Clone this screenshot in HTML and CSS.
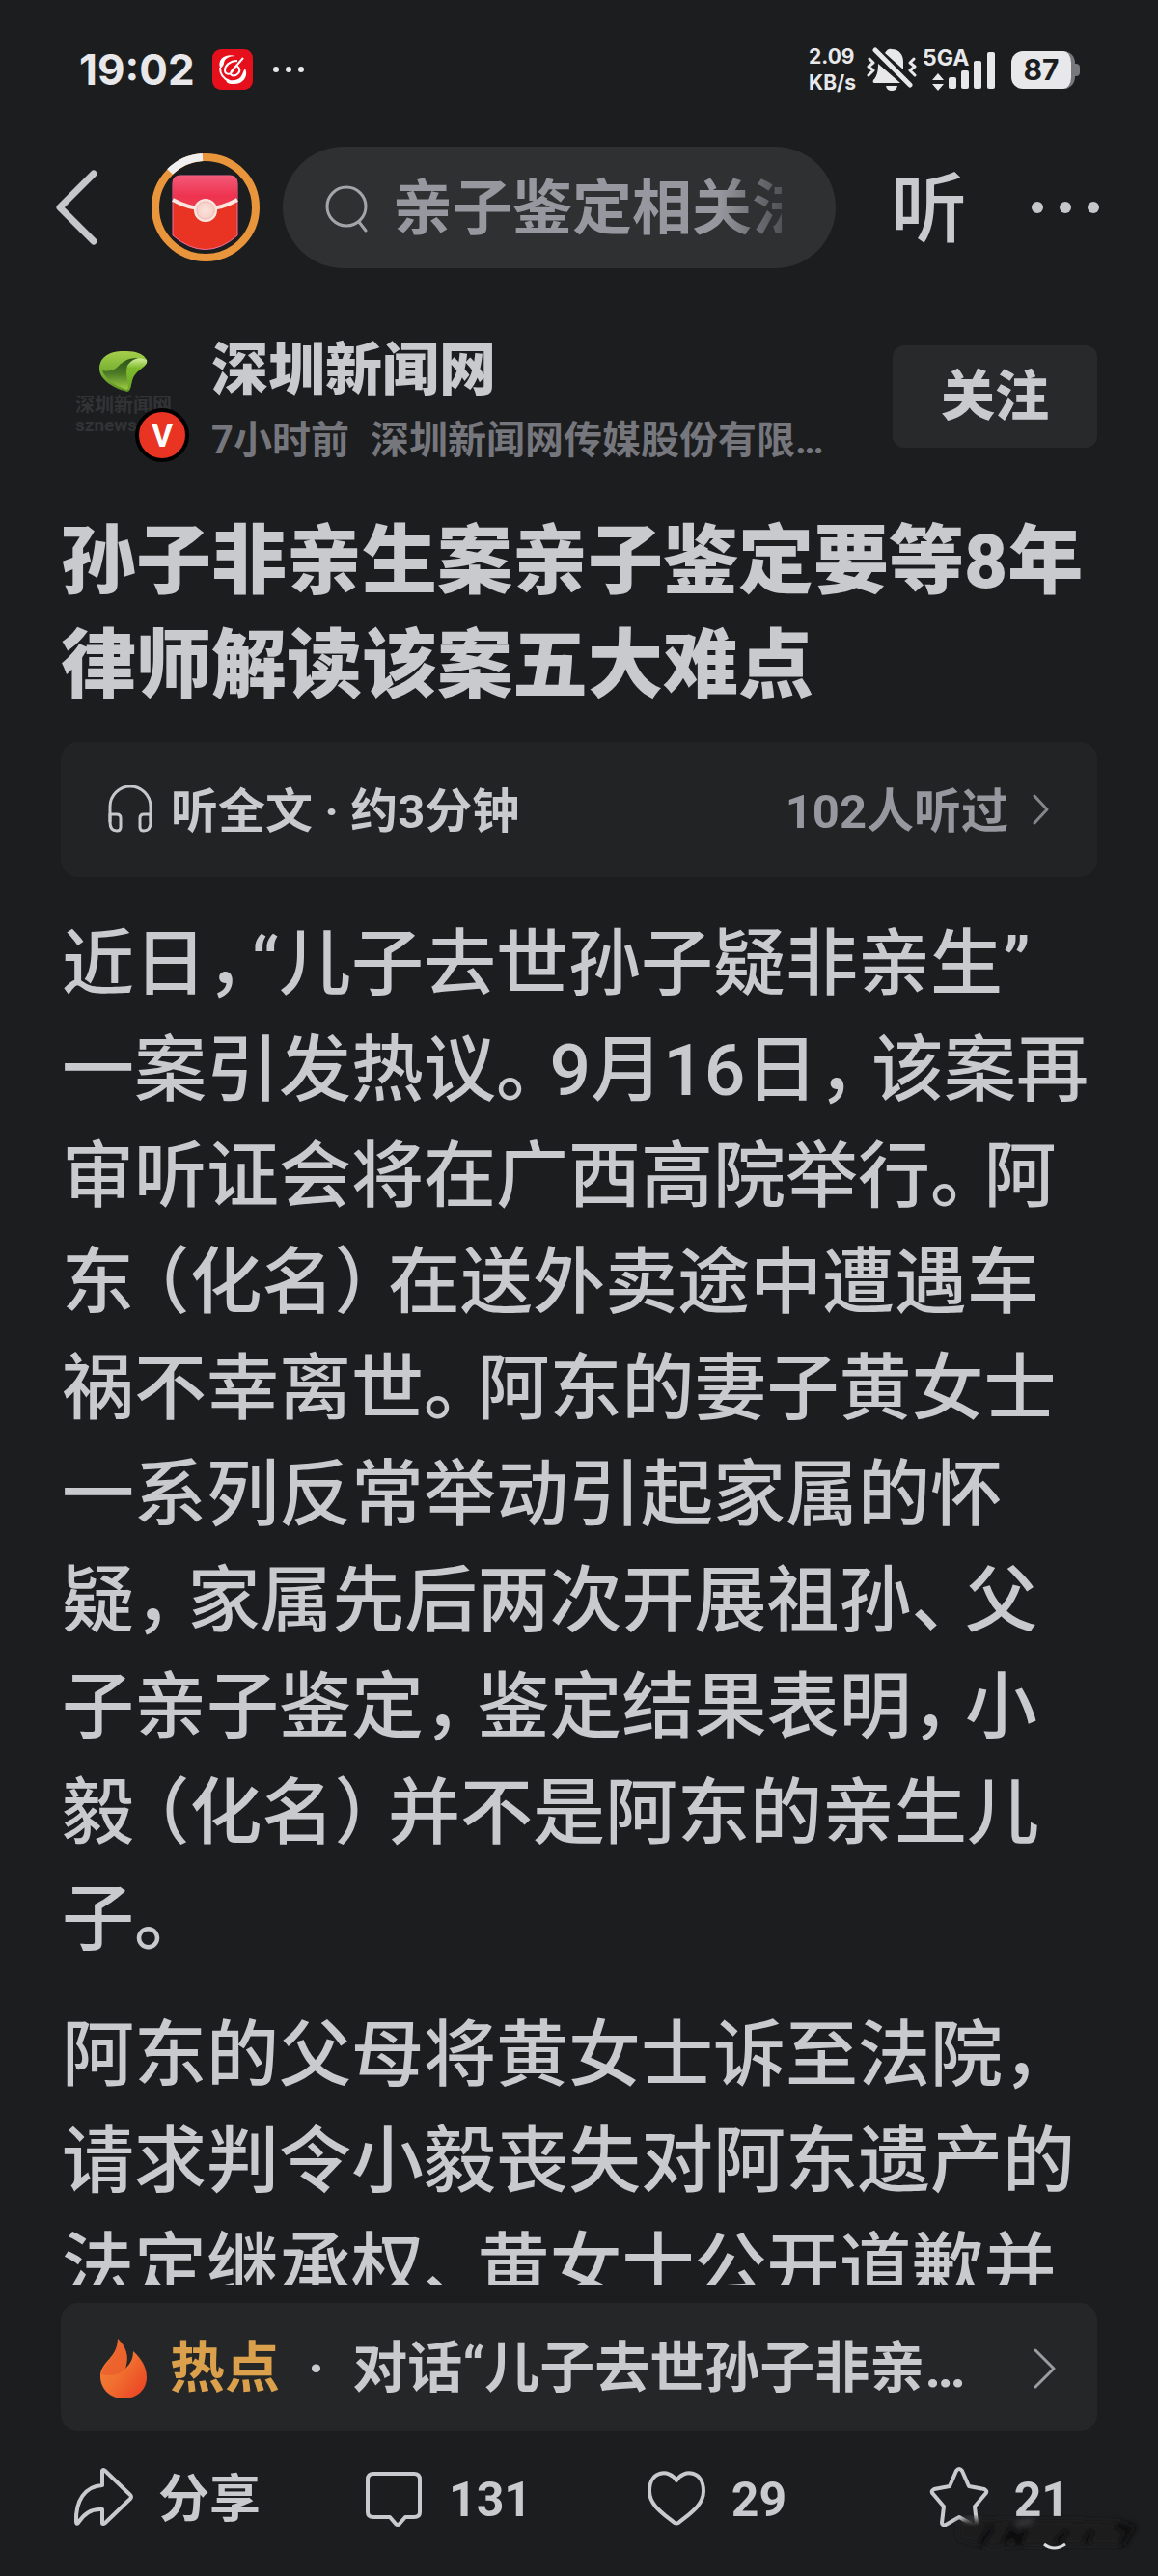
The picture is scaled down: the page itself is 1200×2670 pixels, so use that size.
FILE: index.html
```
<!DOCTYPE html>
<html lang="zh-CN">
<head>
    <meta charset="UTF-8">
    <meta name="viewport" content="width=device-width, initial-scale=1">
    <title>孙子非亲生案亲子鉴定要等8年 律师解读该案五大难点</title>
    <link rel="stylesheet" href="styles.css">
</head>
<body>
    <!-- phone status bar -->
    <div class="status">
        <span class="time">19:02</span>
        <svg class="app-badge" width="42" height="42" viewBox="0 0 42 42">
            <rect width="42" height="42" rx="9" fill="#e60f1c"/>
            <path d="M8 19c-3-9 6-15 16-12-7 0-12 3-12 8-1 3-3 5-4 4z" fill="#fff"/>
            <path d="M34 20c4 9-3 17-13 16-5 0-8-3-6-5 3 2 12 2 15-3 2-3 2-6 4-8z" fill="#fff"/>
            <path d="M8 19c0 7 4 12 10 14M32 9L19 24M26 12c-8 0-13 5-13 10 0 4 5 5 7 2l4-6c3-2 6 4 3 7s-6 3-8 1" fill="none" stroke="#fff" stroke-width="2"/>
        </svg>
        <svg class="status-dots" width="34" height="8" viewBox="0 0 34 8" fill="#e8e8ea">
            <circle cx="4" cy="4" r="3"/><circle cx="17" cy="4" r="3"/><circle cx="30" cy="4" r="3"/>
        </svg>
        <div class="status-right">
            <div class="speed"><span>2.09</span><span>KB/s</span></div>
            <svg width="52" height="46" viewBox="0 0 52 46" fill="#e8e8ea">
                <path d="M19 6c2-4 5-5 7-4 8 0 12 6 12 13v8zM12 17l23 20H8c-1 0-2-1-1-3 4-4 5-10 5-17zM20 40h12c-1 4-3 5-6 5s-5-1-6-5z"/>
                <path d="M9 3l36 36" stroke="#e8e8ea" stroke-width="5" stroke-linecap="round"/>
                <path d="M3 12l4 4-5 4 5 4-5 5M49 12l-4 4 5 4-5 4 5 5" fill="none" stroke="#e8e8ea" stroke-width="3" stroke-linejoin="round" stroke-linecap="round"/>
            </svg>
            <div class="network">
                <span class="network-type">5GA</span>
                <svg width="76" height="46" viewBox="0 0 76 46" fill="#e8e8ea">
                    <path d="M16 27l6 7H10zM16 45l6-7H10z"/>
                    <rect x="27" y="31" width="8" height="12" rx="2"/>
                    <rect x="40" y="24" width="8" height="19" rx="2"/>
                    <rect x="53" y="14" width="8" height="29" rx="2"/>
                    <rect x="67" y="5" width="8" height="38" rx="2"/>
                </svg>
            </div>
            <div class="battery"><span>87</span></div>
        </div>
    </div>

    <!-- navigation -->
    <header class="nav">
        <button class="icon-btn back" aria-label="返回">
            <svg width="44" height="80" viewBox="0 0 44 80"><path d="M39 5L4 40l35 35" fill="none" stroke="#c6c7ca" stroke-width="7" stroke-linecap="round" stroke-linejoin="round"/></svg>
        </button>
        <button class="icon-btn packet" aria-label="红包">
            <svg width="114" height="114" viewBox="0 0 114 114">
                <defs>
                    <linearGradient id="flap" x1="0" y1="0" x2="0" y2="1">
                        <stop offset="0" stop-color="#f25a78"/><stop offset=".6" stop-color="#ee3350"/><stop offset="1" stop-color="#ec3f4c"/>
                    </linearGradient>
                    <radialGradient id="knob" cx=".5" cy=".5" r=".5">
                        <stop offset="0" stop-color="#fbe3dd"/><stop offset=".7" stop-color="#f6d2ca"/><stop offset="1" stop-color="#fdeee9"/>
                    </radialGradient>
                </defs>
                <circle cx="57" cy="57" r="52" fill="none" stroke="#e9953c" stroke-width="8"/>
                <path d="M20 20A52 52 0 0 1 54 5" fill="none" stroke="#efefef" stroke-width="8"/>
                <path d="M23 32q0-8 8-8h51q8 0 8 8v54Q57 115 23 86z" fill="#e93323" stroke="#ee6fa0" stroke-width="1"/>
                <path d="M23 32q0-8 8-8h51q8 0 8 8v18Q57 68 23 50z" fill="url(#flap)"/>
                <path d="M23 49q34 19 67 0" fill="none" stroke="#fbe6e0" stroke-width="4"/>
                <circle cx="57" cy="60" r="12" fill="url(#knob)"/>
                <circle cx="57" cy="60" r="9" fill="none" stroke="#edbfb6" stroke-width="1"/>
            </svg>
        </button>
        <label class="search">
            <svg width="44" height="50" viewBox="0 0 44 50" fill="none" stroke="#a4a5a9" stroke-width="3" stroke-linecap="round"><circle cx="22" cy="22" r="20"/><path d="M35 38l7 9"/></svg>
            <input type="text" placeholder="亲子鉴定相关法律" aria-label="搜索">
        </label>
        <button class="icon-btn listen-btn">听</button>
        <button class="icon-btn more" aria-label="更多">
            <svg width="72" height="14" viewBox="0 0 72 14" fill="#c6c7ca"><circle cx="7" cy="7" r="6"/><circle cx="36" cy="7" r="6"/><circle cx="65" cy="7" r="6"/></svg>
        </button>
    </header>

    <main class="content">
        <section class="author">
            <div class="avatar">
                <svg class="leaf" width="54" height="46" viewBox="0 0 54 46">
                    <defs>
                        <linearGradient id="leaf" x1="0" y1="0" x2="0" y2="1">
                            <stop offset="0" stop-color="#a5cf4c"/><stop offset=".4" stop-color="#7fb536"/><stop offset="1" stop-color="#5f9428"/>
                        </linearGradient>
                        <linearGradient id="fold" x1="0" y1="0" x2="0" y2="1">
                            <stop offset="0" stop-color="#2c4f17"/><stop offset=".5" stop-color="#4d7c27"/><stop offset="1" stop-color="#9fd040"/>
                        </linearGradient>
                        <linearGradient id="wing" x1="0" y1="0" x2="0" y2="1">
                            <stop offset="0" stop-color="#d3ec98"/><stop offset=".3" stop-color="#7dbb2c"/><stop offset="1" stop-color="#6ca82a"/>
                        </linearGradient>
                    </defs>
                    <path d="M2 20C2 6 16 1 30 2c10 0 18 3 21 9 2 6-8 9-12 15-5 6-3 17-8 18C18 41 2 32 2 20z" fill="url(#leaf)"/>
                    <path d="M5 22c5 1 10 1 15-3 5-5 10-10 22-10-8 3-11 8-11 14 0 5 3 12 0 19C18 38 8 31 5 22z" fill="url(#fold)"/>
                    <path d="M31 17c5-8 13-9 20-6 2 6-8 9-12 15-5 6-3 14-7 17 1-9-4-16-1-26z" fill="url(#wing)"/>
                </svg>
                <span class="avatar-name">深圳新闻网</span>
                <span class="avatar-site">sznews</span>
                <span class="verified">V</span>
            </div>
            <div class="author-info">
                <a class="author-name" href="#">深圳新闻网</a>
                <p class="author-meta"><span class="posted">7小时前</span>深圳新闻网传媒股份有限公司官方账号</p>
            </div>
            <button class="follow">关注</button>
        </section>

        <h1 class="title">孙子非亲生案亲子鉴定要等8年 律师解读该案五大难点</h1>

        <button class="listen-bar">
            <svg width="46" height="50" viewBox="0 0 46 50" fill="none" stroke="#c6c7ca" stroke-width="3" stroke-linejoin="round">
                <path d="M2 38V22a21 21 0 0 1 42 0v16"/>
                <path d="M2 30h7q4 0 4 4v9q0 4-4 4-7 0-7-9zM44 30h-7q-4 0-4 4v9q0 4 4 4 7 0 7-9z"/>
            </svg>
            <span class="listen-text">听全文 · 约3分钟</span>
            <span class="listen-count">102人听过</span>
            <svg width="18" height="32" viewBox="0 0 18 32"><path d="M2 2l13 14L2 30" fill="none" stroke="#85868a" stroke-width="3" stroke-linecap="round" stroke-linejoin="round"/></svg>
        </button>

        <article class="article">
            <p>近日<span class="tight">，</span>“儿子去世孙子疑非亲生”<br>
            一案引发热议<span class="close">。</span>9月16日<span class="close">，</span>该案再<br>
            审听证会将在广西高院举行<span class="close">。</span>阿<br>
            东<span class="open">（</span>化名<span class="close">）</span>在送外卖途中遭遇车<br>
            祸不幸离世<span class="close">。</span>阿东的妻子黄女士<br>
            一系列反常举动引起家属的怀<br>
            疑<span class="close">，</span>家属先后两次开展祖孙<span class="close">、</span>父<br>
            子亲子鉴定<span class="close">，</span>鉴定结果表明<span class="close">，</span>小<br>
            毅<span class="open">（</span>化名<span class="close">）</span>并不是阿东的亲生儿<br>
            子<span class="close">。</span></p>
            <p>阿东的父母将黄女士诉至法院<span class="close">，</span><br>
            请求判令小毅丧失对阿东遗产的<br>
            法定继承权<span class="close">、</span>黄女士公开道歉并</p>
        </article>
    </main>

    <footer class="footer">
        <a class="hot" href="#">
            <svg width="50" height="64" viewBox="0 0 50 64">
                <defs>
                    <linearGradient id="fire" x1="0" y1="0" x2="1" y2="1">
                        <stop offset="0" stop-color="#f58a3c"/><stop offset=".5" stop-color="#f1702f"/><stop offset="1" stop-color="#e93c22"/>
                    </linearGradient>
                </defs>
                <path d="M19 1c9 9 12 18 8 31 5-5 8-10 8-18 9 8 14 17 14 27 0 13-10 22-24 22S1 53 1 40C1 25 19 21 19 1z" fill="url(#fire)"/>
                <path d="M2 38C5 24 19 20 19 1c9 9 12 18 8 31-6 7-15 8-25 6z" fill="#e8562a" opacity=".6"/>
            </svg>
            <span class="hot-tag">热点</span>
            <span class="hot-dot">·</span>
            <span class="hot-title">对话“儿子去世孙子非亲生”案当事人</span>
            <svg width="24" height="42" viewBox="0 0 24 42"><path d="M2 2l19 19L2 40" fill="none" stroke="#9c9da1" stroke-width="3" stroke-linecap="round" stroke-linejoin="round"/></svg>
        </a>
        <div class="toolbar">
            <button class="tool">
                <svg width="62" height="62" viewBox="0 0 62 62"><path d="M30 4q1-2 3 0l26 25q2 2 0 4L33 58q-3 2-3 0V44C19 43 11 48 5 58q-2 2-2-1C2 35 12 20 30 19z"/></svg>
                <span class="tool-text">分享</span>
            </button>
            <button class="tool" aria-label="评论 131">
                <svg width="62" height="62" viewBox="0 0 62 62"><path d="M10 7h42q6 0 6 6v34q0 5-6 5h-9l-6 7q-2 2-4 0l-6-7H10q-6 0-6-5V13q0-6 6-6z"/></svg>
                <span class="tool-text tool-count">131</span>
            </button>
            <button class="tool" aria-label="点赞 29">
                <svg width="62" height="62" viewBox="0 0 62 62"><path d="M31 14C24 2 3 3 3 25c0 15 15 24 26 33q2 1 4 0c11-9 26-18 26-33C59 3 38 2 31 14z"/></svg>
                <span class="tool-text tool-count">29</span>
            </button>
            <button class="tool" aria-label="收藏 21">
                <svg width="62" height="62" viewBox="0 0 62 62"><path d="M28 4q3-4 6 0l7 16 16 3q4 2 1 5L47 41l2 17q-1 3-4 2l-14-8-14 8q-4 1-4-2l2-17L4 28q-3-3 1-5l16-3z"/></svg>
                <span class="tool-text tool-count">21</span>
            </button>
        </div>
        <!-- blurred smudge over the corner of the toolbar -->
        <svg class="smudge" width="200" height="44" viewBox="0 0 200 44">
            <defs><filter id="soft"><feGaussianBlur stdDeviation="3"/></filter></defs>
            <g filter="url(#soft)">
                <path d="M8 10l48-3 70 1 56 2 6 12-8 12H120l-80 2L10 28z" fill="#1b1b1d"/>
                <path d="M32 34l12-20M56 33l8-14 8 12 6-14M110 32l12-14M140 32l8-14M172 14l16 2-10 18" fill="none" stroke="#101011" stroke-width="7"/>
                <path d="M14 8l14-2M70 12l16-4" stroke="#4a4b4e" stroke-width="3"/>
            </g>
            <path d="M98 33q10 8 22 0" fill="none" stroke="#dcdcdc" stroke-width="3"/>
        </svg>
    </footer>
</body>
</html>
```
FILE: styles.css
```
* {
    box-sizing: border-box;
}
body {
    margin: 0;
    height: 100vh;
    display: flex;
    flex-direction: column;
    overflow: hidden;
    background-color: #1c1d1f;
    color: #c9cacd;
    font-family: Roboto, "Noto Sans CJK SC", sans-serif;
    font-weight: 500;
}
button {
    padding: 0;
    border: 0;
    background: none;
    color: inherit;
    font: inherit;
    cursor: pointer;
}
a {
    color: inherit;
    text-decoration: none;
}
p {
    margin: 0;
}
svg {
    display: block;
    flex: none;
}

/* status bar */
.status {
    flex: none;
    display: flex;
    align-items: center;
    height: 144px;
    padding: 0 78px 0 82px;
    color: #e8e8ea;
    font-family: Inter, sans-serif;
    font-weight: 700;
}
.time {
    font-size: 44px;
    line-height: 52px;
}
.app-badge {
    margin-left: 18px;
}
.status-dots {
    margin-left: 20px;
}
.status-right {
    display: flex;
    align-items: center;
    margin-left: auto;
}
.speed {
    display: flex;
    flex-direction: column;
    margin-right: 11px;
    font-size: 21px;
    line-height: 27px;
}
.network {
    position: relative;
    margin: 0 16px 0 6px;
}
.network-type {
    position: absolute;
    left: 0;
    top: 0;
    font-size: 23px;
    line-height: 22px;
}
.battery {
    position: relative;
    width: 66px;
    height: 39px;
    margin-right: 8px;
    border-radius: 12px;
    background-color: #e8e8ea;
    border-right: 4px solid #77787b;
    color: #1c1d1f;
    font-size: 30px;
    line-height: 39px;
    text-align: center;
}
.battery::after {
    content: "";
    position: absolute;
    right: -9px;
    top: 13px;
    width: 6px;
    height: 13px;
    border-radius: 0 4px 4px 0;
    background-color: #77787b;
}

/* navigation */
.nav {
    flex: none;
    display: flex;
    align-items: center;
    height: 142px;
    padding: 0 60px 0 58px;
}
.icon-btn {
    flex: none;
}
.packet {
    margin-left: 54px;
}
.search {
    flex: 1;
    min-width: 0;
    display: flex;
    align-items: center;
    height: 126px;
    margin-left: 23px;
    padding: 4px 56px 0 44px;
    border-radius: 63px;
    background-color: #2f3032;
}
.search input {
    flex: 1;
    min-width: 0;
    width: 100%;
    margin-left: 26px;
    padding: 0;
    border: 0;
    outline: 0;
    background: none;
    color: #97979f;
    font: inherit;
    font-size: 62px;
    font-weight: 700;
    line-height: 90px;
    -webkit-mask-image: linear-gradient(to right, #000 84%, transparent 108%);
    mask-image: linear-gradient(to right, #000 84%, transparent 108%);
}
.search input::placeholder {
    color: #97979f;
    opacity: 1;
}
.listen-btn {
    margin-left: 57px;
    padding-top: 6px;
    font-size: 79px;
    line-height: 100px;
}
.more {
    margin-left: 66px;
}

/* article */
.content {
    flex: 1;
    min-height: 0;
    overflow: hidden;
    padding: 52px 63px 0;
}
.author {
    display: flex;
    align-items: flex-start;
    height: 150px;
}
.avatar {
    position: relative;
    flex: none;
    display: flex;
    flex-direction: column;
    align-items: center;
    width: 130px;
    height: 150px;
    padding-top: 24px;
    color: #323335;
    font-weight: 700;
}
.avatar-name {
    font-size: 20px;
    line-height: 24px;
}
.avatar-site {
    align-self: flex-start;
    margin-left: 15px;
    font-size: 19px;
    line-height: 18px;
}
.verified {
    position: absolute;
    left: 77px;
    top: 85px;
    width: 56px;
    height: 56px;
    border: 4px solid #000;
    border-radius: 50%;
    background-color: #e93323;
    color: #fff;
    font-size: 34px;
    line-height: 49px;
    text-align: center;
}
.author-info {
    flex: 1;
    min-width: 0;
    margin: 0 54px 0 26px;
    padding-top: 3px;
}
.author-name {
    display: block;
    font-size: 59px;
    font-weight: 900;
    line-height: 86px;
}
.author-meta {
    overflow: hidden;
    color: #76767d;
    font-size: 40px;
    font-weight: 700;
    line-height: 60px;
    white-space: nowrap;
    text-overflow: ellipsis;
}
.posted {
    margin-right: 22px;
}
.follow {
    flex: none;
    width: 212px;
    height: 106px;
    margin-top: 20px;
    border-radius: 12px;
    background-color: #28292b;
    font-size: 56px;
    font-weight: 900;
    line-height: 80px;
}
.title {
    margin: 41px 0 24px;
    font-size: 78px;
    font-weight: 900;
    line-height: 108px;
}
.listen-bar {
    display: flex;
    align-items: center;
    width: 100%;
    height: 140px;
    padding: 0 49px;
    border-radius: 18px;
    background-color: #222325;
    font-size: 49px;
    font-weight: 700;
    line-height: 70px;
}
.listen-text,
.listen-count {
    padding-top: 6px;
}
.listen-text {
    margin-left: 19px;
}
.listen-count {
    margin: 0 25px 0 auto;
    color: #97979f;
}
.article {
    margin-top: 35px;
    padding-left: 1px;
    font-size: 75px;
    line-height: 110px;
    white-space: nowrap;
}
.article p {
    margin-bottom: 31px;
}
/* punctuation takes about three quarters of an em */
.tight,
.open,
.close {
    font-feature-settings: "halt";
}
.tight {
    padding-right: 9px;
}
.open {
    padding-left: 20px;
}
.close {
    padding-right: 18px;
}

/* bottom */
.footer {
    position: relative;
    flex: none;
    padding-top: 19px;
}
.hot {
    display: flex;
    align-items: center;
    height: 133px;
    margin: 0 63px;
    padding: 2px 42px 0 40px;
    border-radius: 18px;
    background-color: #252628;
    font-size: 57px;
    font-weight: 700;
    line-height: 80px;
}
.hot-tag {
    margin-left: 23px;
    color: #daa04c;
}
.hot-dot {
    margin: 0 29px;
}
.hot-title {
    flex: 1;
    min-width: 0;
    margin-right: 48px;
    overflow: hidden;
    white-space: nowrap;
    text-overflow: ellipsis;
}
.toolbar {
    display: grid;
    grid-template-columns: 301px 1fr 1fr auto;
    height: 150px;
    padding: 0 92px 14px 76px;
}
.tool {
    display: flex;
    align-items: center;
    font-size: 53px;
    font-weight: 700;
    line-height: 70px;
}
.tool svg {
    fill: none;
    stroke: #c9cacd;
    stroke-width: 4;
    stroke-linejoin: round;
}
.tool-text {
    margin-left: 26px;
    padding-top: 5px;
}
.tool-count {
    font-size: 50px;
}
.smudge {
    position: absolute;
    right: 16px;
    bottom: 22px;
    pointer-events: none;
}
```
